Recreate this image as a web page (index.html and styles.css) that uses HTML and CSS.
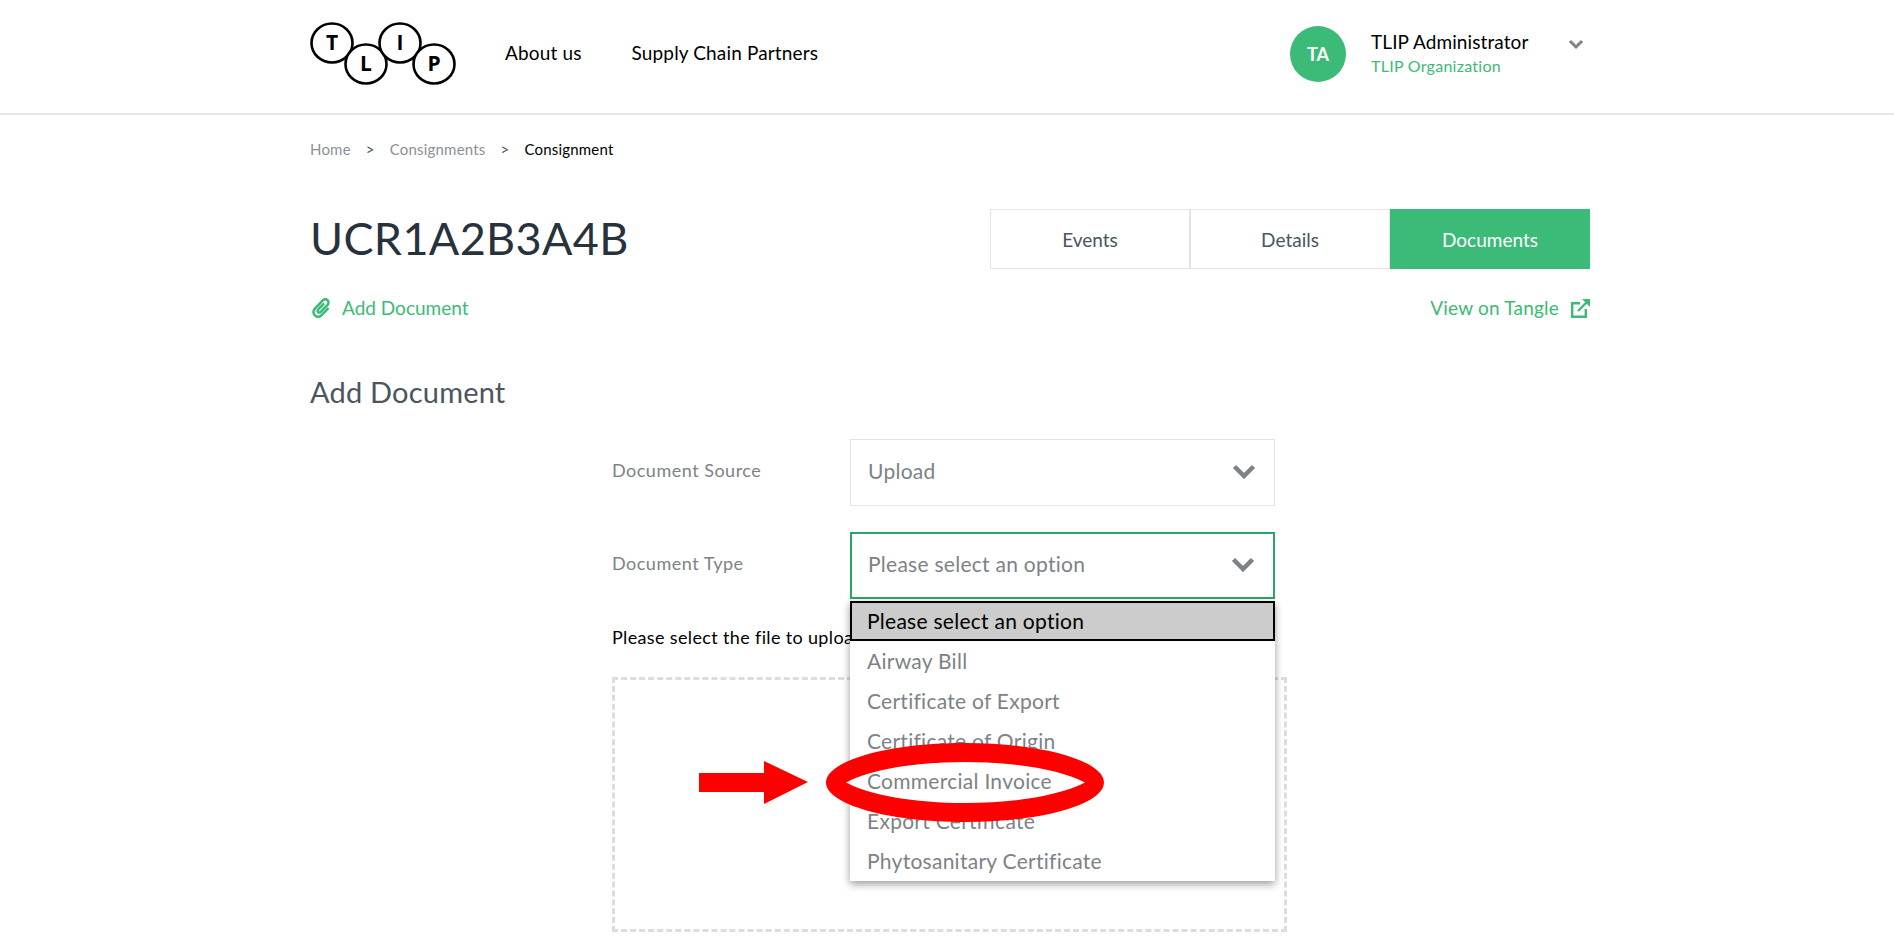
FILE: index.html
```html
<!DOCTYPE html>
<html>
  <head>
    <title>Consignment</title>
    <meta name="viewport" content="width=device-width, initial-scale=1">
    <link rel="stylesheet" href="styles.css">
  </head>
  <body>
    <header class="topbar">
      <div class="wrap topbar-inner">
        <svg class="logo" width="146" height="64" viewBox="0 0 146 64">
          <g fill="#fff" stroke="#000" stroke-width="2.6">
            <ellipse cx="22" cy="21" rx="20.5" ry="19.5"/>
            <ellipse cx="56" cy="42" rx="20.5" ry="19.5"/>
            <ellipse cx="90" cy="21" rx="20.5" ry="19.5"/>
            <ellipse cx="124" cy="42" rx="20.5" ry="19.5"/>
          </g>
          <g class="logo-text" text-anchor="middle">
            <text x="22" y="28">T</text>
            <text x="56" y="49">L</text>
            <text x="90" y="28">I</text>
            <text x="124" y="49">P</text>
          </g>
        </svg>
        <nav class="mainnav">
          <a href="#">About us</a>
          <a href="#">Supply Chain Partners</a>
        </nav>
        <div class="user">
          <div class="avatar">TA</div>
          <div class="user-info">
            <div class="user-name">TLIP Administrator</div>
            <div class="user-org">TLIP Organization</div>
          </div>
          <svg class="user-arrow" width="16" height="11" viewBox="0 0 16 11"><path d="M2 2l6 6 6-6" fill="none" stroke="#7d8287" stroke-width="3"/></svg>
        </div>
      </div>
    </header>

    <main class="wrap">
      <div class="breadcrumb">
        <a href="#">Home</a><span class="sep">&gt;</span><a href="#">Consignments</a><span class="sep">&gt;</span><span class="current">Consignment</span>
      </div>

      <div class="title-row">
        <h1>UCR1A2B3A4B</h1>
        <div class="tabs">
          <a href="#" class="tab">Events</a>
          <a href="#" class="tab">Details</a>
          <a href="#" class="tab active">Documents</a>
        </div>
      </div>

      <div class="links-row">
        <a href="#" class="add-link">
          <svg width="18" height="20" viewBox="0 0 448 512"><path fill="#3cba78" d="M43.246 466.142c-58.43-60.289-57.341-157.511 1.386-217.581L254.392 34c44.316-45.332 116.351-45.336 160.671 0 43.89 44.894 43.943 117.329 0 162.276L232.214 383.128c-29.855 30.537-78.633 30.111-107.982-.998-28.275-29.97-27.368-77.473 1.452-106.953l143.743-146.835c6.182-6.314 16.312-6.422 22.626-.241l22.861 22.379c6.315 6.182 6.422 16.312.241 22.626L171.427 319.927c-4.932 5.045-5.236 13.428-.648 18.292 4.372 4.634 11.245 4.711 15.688.165l182.849-186.851c19.613-20.062 19.613-52.725-.011-72.798-19.189-19.627-49.957-19.637-69.154 0L90.39 293.295c-34.763 35.56-35.299 93.12-1.191 128.313 34.01 35.093 88.985 35.137 123.058.286l172.06-175.999c6.177-6.319 16.307-6.433 22.626-.256l22.877 22.364c6.319 6.177 6.434 16.307.256 22.626l-172.06 175.998c-59.576 60.938-155.943 60.216-214.77-.485z"/></svg>
          Add Document
        </a>
        <a href="#" class="tangle-link">
          View on Tangle
          <svg width="19" height="19" viewBox="0 0 19 19"><g fill="none" stroke="#3cba78" stroke-width="2.4"><path d="M9 4.2H1.2v13.6h13.6V10"/><path d="M7 12L17 2"/></g><path fill="#3cba78" d="M11 0h8v8z"/></svg>
        </a>
      </div>

      <h2>Add Document</h2>

      <form class="doc-form">
        <div class="field">
          <label>Document Source</label>
          <div class="select">
            <span>Upload</span>
            <svg width="24" height="15" viewBox="0 0 24 15"><path d="M2.500 2.500l9.500 9.500 9.500-9.500" fill="none" stroke="#7d8287" stroke-width="4.500"/></svg>
          </div>
        </div>
        <div class="field">
          <label>Document Type</label>
          <div class="select focused">
            <span>Please select an option</span>
            <svg width="24" height="15" viewBox="0 0 24 15"><path d="M2.500 2.500l9.500 9.500 9.500-9.500" fill="none" stroke="#7d8287" stroke-width="4.500"/></svg>
          </div>
          <ul class="dropdown">
            <li class="selected">Please select an option</li>
            <li>Airway Bill</li>
            <li>Certificate of Export</li>
            <li>Certificate of Origin</li>
            <li>Commercial Invoice</li>
            <li>Export Certificate</li>
            <li>Phytosanitary Certificate</li>
          </ul>
        </div>
        <p class="upload-label">Please select the file to upload</p>
        <div class="dropzone"></div>

        <svg class="callout" width="405" height="79" viewBox="0 0 405 79">
          <path fill="#f00" d="M0 30h65L65 18 109 39 65 61V49H0z"/>
          <path fill="#f00" fill-rule="evenodd" d="M127 39.500C127 17.700 189 0 266 0s139 17.700 139 39.500S343 79 266 79 127 61.300 127 39.500zM147 39.500C170 52 215 60 266 60s96-8 120-20.500C362 27 317 19 266 19s-96 8-119 20.500z"/>
        </svg>
      </form>
    </main>
  </body>
</html>
```

FILE: styles.css
```css
html, body {
  margin: 0;
  height: 100%;
  overflow: hidden;
}
body {
  background-color: #fff;
  font-family: "Lato", "Open Sans", sans-serif;
  color: #000;
}
a {
  text-decoration: none;
  color: inherit;
}
.wrap {
  width: 1280px;
  margin-left: 310px;
}
.topbar {
  height: 113px;
  border-bottom: 2px solid #e6e6e6;
}
.topbar-inner {
  display: flex;
  align-items: center;
  height: 107px;
}
.logo {
  margin-top: 1px;
}
.logo-text {
  font-family: "Open Sans", sans-serif;
  font-weight: 700;
  font-size: 21px;
  fill: #000;
}
.mainnav {
  display: flex;
  gap: 50px;
  margin-left: 49px;
  margin-bottom: 3px;
  font-size: 19px;
  letter-spacing: 0.15px;
}
.user {
  display: flex;
  align-items: center;
  margin-left: auto;
  margin-right: 6px;
}
.avatar {
  width: 56px;
  height: 56px;
  border-radius: 50%;
  background-color: #3cba78;
  color: #fff;
  font-weight: 700;
  font-size: 18px;
  display: flex;
  align-items: center;
  justify-content: center;
}
.user-info {
  margin-left: 25px;
  width: 197px;
}
.user-name {
  font-size: 19px;
  line-height: 24px;
  letter-spacing: 0.1px;
}
.user-org {
  font-size: 16px;
  line-height: 24px;
  color: #3cba78;
  letter-spacing: 0.27px;
}
.user-arrow {
  margin-bottom: 18px;
}
.breadcrumb {
  display: flex;
  align-items: center;
  height: 20px;
  margin-top: 24px;
  font-size: 15px;
  color: #8b9197;
  letter-spacing: 0.2px;
}
.breadcrumb .sep {
  margin: 0 15px;
  color: #4b5560;
}
.breadcrumb .current {
  color: #000;
}
.title-row {
  display: flex;
  align-items: center;
  justify-content: space-between;
  margin-top: 50px;
}
h1 {
  margin: 0 0 3px;
  font-size: 45px;
  font-weight: 400;
  color: #28323c;
  letter-spacing: 0.35px;
}
.tabs {
  display: flex;
}
.tab {
  width: 200px;
  height: 60px;
  box-sizing: border-box;
  display: flex;
  align-items: center;
  justify-content: center;
  border: 1px solid #e4e4e4;
  font-size: 19px;
  color: #4b5560;
}
.tab.active {
  background-color: #3cba78;
  border-color: #3cba78;
  color: #fff;
}
.links-row {
  display: flex;
  justify-content: space-between;
  margin-top: 29px;
  font-size: 19px;
  line-height: 20px;
  color: #3cba78;
}
.add-link, .tangle-link {
  display: flex;
  align-items: center;
}
.add-link svg {
  margin: 0 12px 0 2px;
}
.tangle-link {
  letter-spacing: 0.2px;
}
.tangle-link svg {
  margin-left: 12px;
}
h2 {
  margin: 56px 0 0;
  font-size: 29px;
  line-height: 36px;
  font-weight: 400;
  color: #4b5560;
  letter-spacing: 0.2px;
}
.doc-form {
  position: relative;
  width: 675px;
  margin: 29px 0 0 302px;
}
.field {
  position: relative;
  display: flex;
  align-items: center;
  margin-bottom: 26px;
}
.field label {
  width: 238px;
  margin-bottom: 6px;
  font-size: 18px;
  color: #7d8287;
  letter-spacing: 0.5px;
}
.select {
  width: 425px;
  height: 67px;
  box-sizing: border-box;
  display: flex;
  align-items: center;
  justify-content: space-between;
  padding: 0 18px 5px 17px;
  border: 1px solid #e4e4e4;
  font-size: 21px;
  color: #7d8287;
  letter-spacing: 0.27px;
}
.select.focused {
  border: 2px solid #2aa566;
  padding: 0 18px 5px 16px;
}
.select svg {
  margin-top: 2px;
}
.dropdown {
  position: absolute;
  z-index: 1;
  top: 69px;
  left: 238px;
  width: 425px;
  box-sizing: border-box;
  margin: 0;
  padding: 0;
  list-style: none;
  background-color: #fff;
  box-shadow: 0 3px 8px rgba(0, 0, 0, 0.4);
  font-size: 21px;
  color: #7d8287;
  letter-spacing: 0.27px;
}
.dropdown li {
  height: 40px;
  line-height: 40px;
  padding-left: 17px;
}
.dropdown li.selected {
  box-sizing: border-box;
  line-height: 36px;
  padding-left: 15px;
  background-color: #ccc;
  border: 2px solid #000;
  color: #000;
}
.upload-label {
  margin: 0;
  font-size: 18px;
  line-height: 24px;
  letter-spacing: 0.35px;
}
.dropzone {
  height: 255px;
  margin-top: 28px;
  box-sizing: border-box;
  border: 3px dashed #ddd;
}
.callout {
  position: absolute;
  z-index: 2;
  top: 304px;
  left: 87px;
}
```
